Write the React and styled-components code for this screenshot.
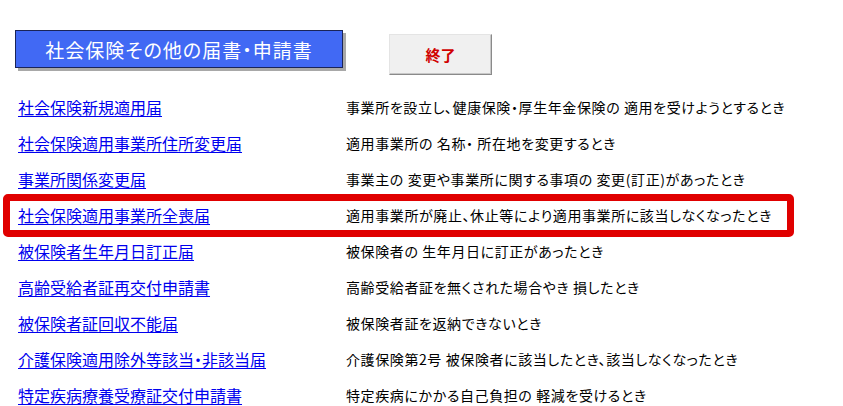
import React from 'react';
import styled, {createGlobalStyle} from 'styled-components';

const GlobalStyle = createGlobalStyle`
    body {
        margin: 0;
        background: #ffffff;
        font-family: "Noto Sans CJK JP", "Noto Sans", sans-serif;
    }
`

const Page = styled.div`
    width: 843px;
    height: 406px;
    overflow: hidden;
    background: #ffffff;
`
const Header = styled.div`
    display: flex;
    align-items: flex-start;
    padding: 30px 0 0 15px;
`
const TitleBox = styled.div`
    box-sizing: border-box;
    width: 328px;
    height: 38px;
    display: flex;
    align-items: center;
    justify-content: center;
    background: #4169f4;
    border: 1px solid #1a2458;
    box-shadow: 3px 3px 0 #a8a8a8;
    color: #ffffff;
    font-size: 19px;
    font-feature-settings: "palt";
    letter-spacing: 1px;
`
const QuitButton = styled.button`
    box-sizing: border-box;
    margin: 4px 0 0 46px;
    width: 103px;
    height: 41px;
    background: #f0f0f0;
    border: 1px solid;
    border-color: #e4e4e4 #8a8a8a #8a8a8a #e4e4e4;
    box-shadow: inset -1px -1px 0 #c8c8c8;
    color: #d00000;
    font-family: "Noto Sans CJK JP", sans-serif;
    font-size: 15px;
    font-weight: bold;
    padding: 0;
    cursor: pointer;
`
const List = styled.div`
    margin-top: 14px;
    display: flex;
    flex-direction: column;
`
const Row = styled.div`
    position: relative;
    display: grid;
    grid-template-columns: 328px 1fr;
    align-items: center;
    height: 36px;
    padding-left: 18px;

    ${p => p.$marked && `
        &::after {
            content: '';
            position: absolute;
            top: -3px;
            bottom: -4px;
            left: 3px;
            width: 791px;
            box-sizing: border-box;
            border: 7px solid #e00000;
            border-radius: 5px;
        }
    `}
`
const FormLink = styled.a`
    justify-self: start;
    color: #0000ee;
    font-size: 16px;
    line-height: 18px;
    font-feature-settings: "palt";
    text-decoration: underline;
    text-underline-offset: 2px;
    white-space: nowrap;
`
const Note = styled.span`
    color: #000000;
    font-size: 14px;
    font-feature-settings: "palt";
    letter-spacing: 0.6px;
    white-space: nowrap;
`

const forms = [
    {name: '社会保険新規適用届', note: '事業所を設立し、健康保険・厚生年金保険の 適用を受けようとするとき'},
    {name: '社会保険適用事業所住所変更届', note: '適用事業所の 名称・ 所在地を変更するとき'},
    {name: '事業所関係変更届', note: '事業主の 変更や事業所に関する事項の 変更(訂正)があったとき'},
    {name: '社会保険適用事業所全喪届', note: '適用事業所が廃止、休止等により適用事業所に該当しなくなったとき', marked: true},
    {name: '被保険者生年月日訂正届', note: '被保険者の 生年月日に訂正があったとき'},
    {name: '高齢受給者証再交付申請書', note: '高齢受給者証を無くされた場合やき 損したとき'},
    {name: '被保険者証回収不能届', note: '被保険者証を返納できないとき'},
    {name: '介護保険適用除外等該当・非該当届', note: '介護保険第2号 被保険者に該当したとき、該当しなくなったとき'},
    {name: '特定疾病療養受療証交付申請書', note: '特定疾病にかかる自己負担の 軽減を受けるとき'},
];

export default function App() {
    return (
        <Page>
            <GlobalStyle />
            <Header>
                <TitleBox>社会保険その他の届書・申請書</TitleBox>
                <QuitButton type='button'>終了</QuitButton>
            </Header>
            <List>
                {forms.map(f => (
                    <Row key={f.name} $marked={f.marked}>
                        <FormLink href='#'>{f.name}</FormLink>
                        <Note>{f.note}</Note>
                    </Row>
                ))}
            </List>
        </Page>
    )
}
